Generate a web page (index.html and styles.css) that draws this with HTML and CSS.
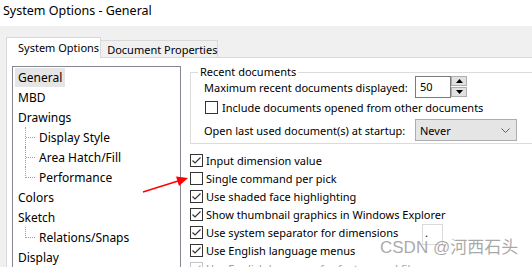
FILE: index.html
```html
<!DOCTYPE html>
<html lang="en">
<head>
    <meta charset="UTF-8">
    <meta name="viewport" content="width=device-width, initial-scale=1.0">
    <title>System Options - General</title>
    <link rel="stylesheet" href="styles.css">
</head>
<body>
    <div class="titlebar">System Options - General</div>

    <div class="dialog">
        <div class="tabs">
            <div class="tab active">System Options</div>
            <div class="tab">Document Properties</div>
        </div>

        <div class="panel">
            <ul class="tree">
                <li class="item"><span class="label selected">General</span></li>
                <li class="item"><span class="label">MBD</span></li>
                <li class="item"><span class="label">Drawings</span></li>
                <li class="item child"><span class="branch"></span><span class="label">Display Style</span></li>
                <li class="item child"><span class="branch"></span><span class="label">Area Hatch/Fill</span></li>
                <li class="item child"><span class="branch last"></span><span class="label">Performance</span></li>
                <li class="item"><span class="label">Colors</span></li>
                <li class="item"><span class="label">Sketch</span></li>
                <li class="item child"><span class="branch last"></span><span class="label">Relations/Snaps</span></li>
                <li class="item"><span class="label">Display</span></li>
            </ul>

            <div class="options">
                <fieldset class="group">
                    <legend>Recent documents</legend>
                    <div class="row">
                        <span class="row-label">Maximum recent documents displayed:</span>
                        <div class="spin">
                            <div class="spin-input">50</div>
                            <div class="spin-btns">
                                <div class="spin-btn"><svg width="7" height="4" viewBox="0 0 7 4"><path d="M3.5 0 L7 4 L0 4 Z" fill="#000"/></svg></div>
                                <div class="spin-btn"><svg width="7" height="4" viewBox="0 0 7 4"><path d="M0 0 L7 0 L3.5 4 Z" fill="#000"/></svg></div>
                            </div>
                        </div>
                    </div>
                    <div class="row check-row">
                        <span class="box"></span>
                        <span>Include documents opened from other documents</span>
                    </div>
                    <div class="row">
                        <span class="row-label">Open last used document(s) at startup:</span>
                        <div class="select">
                            <span>Never</span>
                            <svg width="9" height="5" viewBox="0 0 9 5"><path d="M0.5 0.5 L4.5 4.5 L8.5 0.5" fill="none" stroke="#606060" stroke-width="1"/></svg>
                        </div>
                    </div>
                </fieldset>

                <ul class="checks">
                    <li><span class="box checked"><svg width="11" height="11" viewBox="0 0 11 11"><path d="M1.5 5.5 L4 8 L9.5 2.5" fill="none" stroke="#333" stroke-width="1.2"/></svg></span>Input dimension value</li>
                    <li><span class="box"></span>Single command per pick</li>
                    <li><span class="box checked"><svg width="11" height="11" viewBox="0 0 11 11"><path d="M1.5 5.5 L4 8 L9.5 2.5" fill="none" stroke="#333" stroke-width="1.2"/></svg></span>Use shaded face highlighting</li>
                    <li><span class="box checked"><svg width="11" height="11" viewBox="0 0 11 11"><path d="M1.5 5.5 L4 8 L9.5 2.5" fill="none" stroke="#333" stroke-width="1.2"/></svg></span>Show thumbnail graphics in Windows Explorer</li>
                    <li><span class="box checked"><svg width="11" height="11" viewBox="0 0 11 11"><path d="M1.5 5.5 L4 8 L9.5 2.5" fill="none" stroke="#333" stroke-width="1.2"/></svg></span><span class="sep-text">Use system separator for dimensions</span><span class="sep-box">.</span></li>
                    <li><span class="box checked"><svg width="11" height="11" viewBox="0 0 11 11"><path d="M1.5 5.5 L4 8 L9.5 2.5" fill="none" stroke="#333" stroke-width="1.2"/></svg></span>Use English language menus</li>
                    <li class="disabled"><span class="box checked"><svg width="11" height="11" viewBox="0 0 11 11"><path d="M1.5 5.5 L4 8 L9.5 2.5" fill="none" stroke="#bbb" stroke-width="1.2"/></svg></span>Use English language for feature and file names</li>
                </ul>
            </div>
        </div>
    </div>

    <!-- annotation drawn over the screenshot -->
    <svg class="arrow" width="532" height="267" viewBox="0 0 532 267">
        <line x1="143" y1="192" x2="178" y2="181" stroke="#f00" stroke-width="1.4"/>
        <polygon points="188,178 176,176.5 179,186" fill="#f00"/>
    </svg>
    <div class="watermark">CSDN @河西石头</div>
</body>
</html>
```

FILE: styles.css
```css
html, body {
    margin: 0;
    padding: 0;
    height: 267px;
    overflow: hidden;
}
body {
    position: relative;
    background: #f0f0f0;
    font-family: "Noto Sans", "Liberation Sans", sans-serif;
    font-size: 11px;
    color: #000;
}
ul {
    list-style: none;
    margin: 0;
    padding: 0;
}
.titlebar {
    height: 26px;
    line-height: 22px;
    padding-left: 3px;
    background: #fff;
    font-size: 12.5px;
}
.dialog {
    padding: 11px 0 0 6px;
}
.tabs {
    display: flex;
    align-items: flex-end;
    height: 20px;
}
.tab {
    height: 17px;
    line-height: 18px;
    padding: 0 0 0 6px;
    border: 1px solid #d9d9d9;
    border-bottom: none;
    box-sizing: border-box;
    margin-left: -1px;
}
.tab.active {
    height: 21px;
    line-height: 20px;
    margin-left: 0;
    margin-bottom: -1px;
    padding: 0 1px 0 11px;
    background: #fff;
    position: relative;
    z-index: 1;
}
.panel {
    display: flex;
    background: #fff;
    border-top: 1px solid #d9d9d9;
    border-left: 1px solid #d9d9d9;
    height: 220px;
    width: 600px;
}
.tree {
    width: 167px;
    height: 220px;
    margin: 8px 0 0 5px;
    border: 1px solid #828790;
    flex-shrink: 0;
}
.item {
    display: flex;
    height: 20px;
    align-items: flex-start;
}
.label {
    display: block;
    height: 19px;
    line-height: 19px;
    margin: 1px 0 0 2px;
    padding: 0 3px;
    font-size: 12px;
}
.label.selected {
    background: #e5e5e5;
}
.branch {
    width: 9px;
    height: 20px;
    margin-left: 12px;
    margin-right: -1px;
    border-left: 1px dotted #a0a0a0;
    background: repeating-linear-gradient(to right, #a0a0a0 0 1px, transparent 1px 2px) no-repeat 0 10px / 100% 1px;
}
.branch.last {
    height: 11px;
    background-position: 0 10px;
}
.options {
    margin-left: 9px;
    flex-shrink: 0;
}
.group {
    width: 360px;
    margin: 8px 0 0;
    padding: 0 0 2px 13px;
    border: 1px solid #dcdcdc;
    box-sizing: border-box;
}
.group legend {
    margin-left: -6px;
    padding: 0 2px;
    line-height: 12px;
}
.row {
    display: flex;
    align-items: center;
    height: 22px;
}
.row:first-of-type {
    margin-top: -2px;
}
.row-label {
    width: 211px;
}
.check-row {
    height: 19px;
    margin-bottom: 2px;
}
.check-row .box {
    margin-left: 1px;
    margin-right: 4px;
}
.spin {
    display: flex;
    height: 22px;
}
.spin-input {
    width: 36px;
    border: 1px solid #7a7a7a;
    box-sizing: border-box;
    padding-left: 4px;
    line-height: 20px;
}
.spin-btns {
    display: flex;
    flex-direction: column;
    gap: 1px;
}
.spin-btn {
    width: 16px;
    height: 10px;
    box-sizing: border-box;
    border: 1px solid #adadad;
    background: #e1e1e1;
    display: flex;
    align-items: center;
    justify-content: center;
}
.select {
    display: flex;
    align-items: center;
    justify-content: space-between;
    width: 102px;
    height: 22px;
    box-sizing: border-box;
    padding: 0 6px 0 4px;
    border: 1px solid #adadad;
    background: #e5e5e5;
}
.checks {
    margin-top: 7px;
}
.checks li {
    display: flex;
    align-items: center;
    height: 18px;
    white-space: nowrap;
}
.box {
    width: 13px;
    height: 13px;
    box-sizing: border-box;
    border: 1px solid #333;
    background: #fff;
    margin-right: 3px;
    flex-shrink: 0;
    display: flex;
    align-items: center;
    justify-content: center;
}
.disabled {
    color: #a0a0a0;
}
.disabled .box {
    border-color: #c4c4c4;
}
.sep-text {
    width: 216px;
}
.sep-box {
    width: 21px;
    height: 21px;
    box-sizing: border-box;
    border: 1px solid #dadada;
    padding-left: 2px;
    line-height: 16px;
    align-self: flex-start;
    margin: 1px 0 -4px;
}
.arrow {
    position: absolute;
    left: 0;
    top: 0;
    pointer-events: none;
}
.watermark {
    position: absolute;
    left: 380px;
    top: 233px;
    font-family: "Liberation Sans", "Noto Sans CJK SC", sans-serif;
    font-size: 17px;
    color: rgba(140, 140, 140, 0.75);
}
```
